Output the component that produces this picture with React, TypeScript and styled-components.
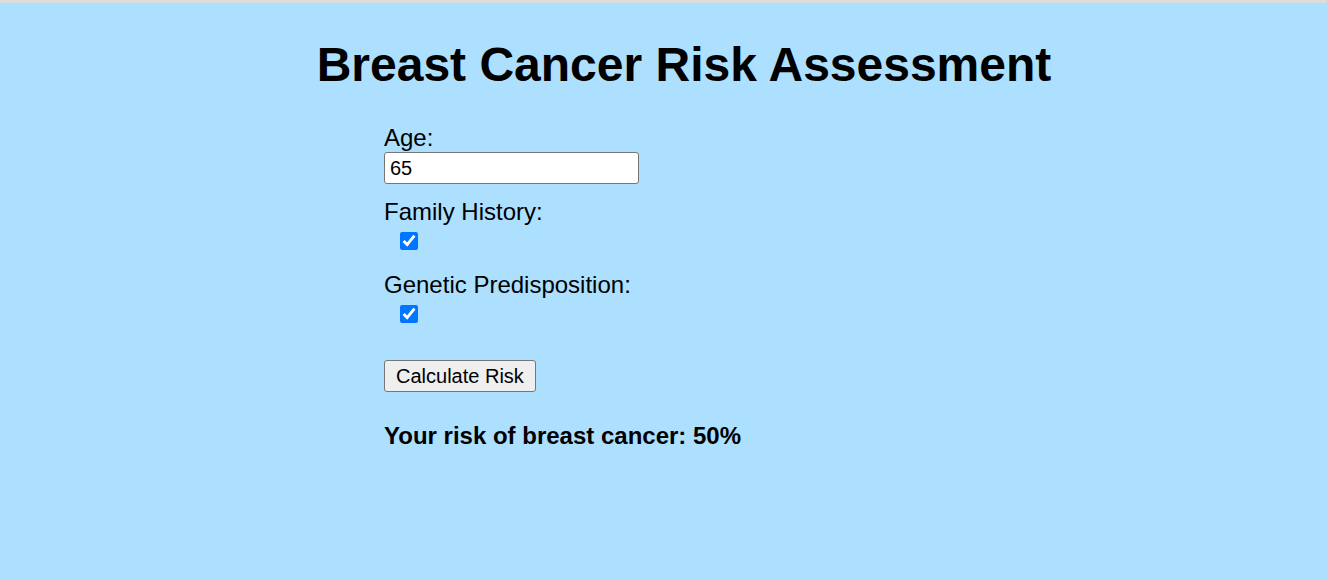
import React, { useState } from "react";
import styled, { createGlobalStyle } from "styled-components";

const COLORS = {
  page: "#ADDFFF",
  strip: "#DCDCDC",
  text: "#000000",
  inputBorder: "#767676",
  buttonBg: "#EFEFEF",
};

const GlobalStyle = createGlobalStyle`
  html, body {
    margin: 0;
    padding: 0;
    background: ${COLORS.page};
  }
  body {
    border-top: 3px solid ${COLORS.strip};
    min-height: 577px;
    font-family: "Liberation Sans", Arial, sans-serif;
    color: ${COLORS.text};
  }
`;

const Page = styled.div`
  padding: 0 0 0 41px;
  display: flex;
  flex-direction: column;
`;

const Title = styled.h1`
  margin: 34px 0 0;
  font-size: 48px;
  line-height: 56px;
  font-weight: 700;
  text-align: center;
`;

const Form = styled.form`
  width: 600px;
  margin: 31px auto 0;
  display: flex;
  flex-direction: column;
`;

const Field = styled.div`
  display: flex;
  flex-direction: column;
  align-items: flex-start;
  margin-bottom: 14px;
`;

const Label = styled.label`
  font-size: 24px;
  line-height: 28px;
`;

const TextInput = styled.input`
  box-sizing: border-box;
  width: 255px;
  height: 32px;
  margin: 0;
  padding: 2px 5px;
  font-family: "Liberation Sans", Arial, sans-serif;
  font-size: 20px;
  border: 1px solid ${COLORS.inputBorder};
  border-radius: 3px;
  background: #fff;
`;

const Check = styled.input.attrs({ type: "checkbox" })`
  width: 18px;
  height: 18px;
  margin: 6px 0 7px 16px;
  accent-color: #0075ff;
`;

const Button = styled.button`
  align-self: flex-start;
  box-sizing: border-box;
  height: 32px;
  margin-top: 16px;
  padding: 0 11px;
  font-family: "Liberation Sans", Arial, sans-serif;
  font-size: 20px;
  color: #000;
  background: ${COLORS.buttonBg};
  border: 1px solid ${COLORS.inputBorder};
  border-radius: 3px;
`;

const Result = styled.p`
  margin: 30px 0 0;
  font-size: 24px;
  line-height: 28px;
  font-weight: 700;
`;

export default function App() {
  const [age, setAge] = useState("65");
  const [family, setFamily] = useState(true);
  const [genetic, setGenetic] = useState(true);

  return (
    <>
      <GlobalStyle />
      <Page>
        <Title>Breast Cancer Risk Assessment</Title>
        <Form onSubmit={(e) => e.preventDefault()}>
          <Field>
            <Label htmlFor="age">Age:</Label>
            <TextInput id="age" value={age} onChange={(e) => setAge(e.target.value)} />
          </Field>
          <Field>
            <Label htmlFor="family">Family History:</Label>
            <Check id="family" checked={family} onChange={(e) => setFamily(e.target.checked)} />
          </Field>
          <Field>
            <Label htmlFor="genetic">Genetic Predisposition:</Label>
            <Check id="genetic" checked={genetic} onChange={(e) => setGenetic(e.target.checked)} />
          </Field>
          <Button type="submit">Calculate Risk</Button>
          <Result>Your risk of breast cancer: 50%</Result>
        </Form>
      </Page>
    </>
  );
}
